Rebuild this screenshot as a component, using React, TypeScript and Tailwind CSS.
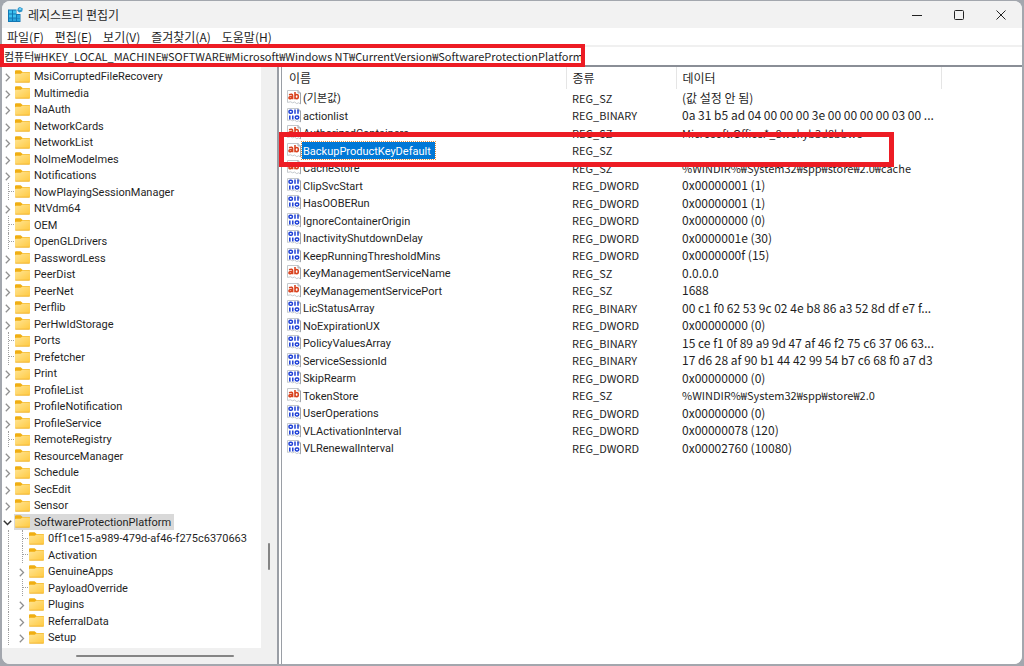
import { useState } from "react"
import clsx from "clsx"

type TreeItem = {
  name: string
  level?: 1
  arrow?: "closed" | "open"
}

type RegistryValue = {
  name: string
  type: "REG_SZ" | "REG_BINARY" | "REG_DWORD"
  data: string
}

const MENUS = ["파일(F)", "편집(E)", "보기(V)", "즐겨찾기(A)", "도움말(H)"]

const KEY_PATH =
  "컴퓨터₩HKEY_LOCAL_MACHINE₩SOFTWARE₩Microsoft₩Windows NT₩CurrentVersion₩SoftwareProtectionPlatform"

const TREE: TreeItem[] = [
  { name: "MsiCorruptedFileRecovery", arrow: "closed" },
  { name: "Multimedia", arrow: "closed" },
  { name: "NaAuth", arrow: "closed" },
  { name: "NetworkCards", arrow: "closed" },
  { name: "NetworkList", arrow: "closed" },
  { name: "NoImeModeImes", arrow: "closed" },
  { name: "Notifications", arrow: "closed" },
  { name: "NowPlayingSessionManager" },
  { name: "NtVdm64", arrow: "closed" },
  { name: "OEM" },
  { name: "OpenGLDrivers" },
  { name: "PasswordLess", arrow: "closed" },
  { name: "PeerDist", arrow: "closed" },
  { name: "PeerNet", arrow: "closed" },
  { name: "Perflib", arrow: "closed" },
  { name: "PerHwIdStorage", arrow: "closed" },
  { name: "Ports" },
  { name: "Prefetcher" },
  { name: "Print", arrow: "closed" },
  { name: "ProfileList", arrow: "closed" },
  { name: "ProfileNotification", arrow: "closed" },
  { name: "ProfileService", arrow: "closed" },
  { name: "RemoteRegistry" },
  { name: "ResourceManager", arrow: "closed" },
  { name: "Schedule", arrow: "closed" },
  { name: "SecEdit", arrow: "closed" },
  { name: "Sensor", arrow: "closed" },
  { name: "SoftwareProtectionPlatform", arrow: "open" },
  { name: "0ff1ce15-a989-479d-af46-f275c6370663", level: 1 },
  { name: "Activation", level: 1 },
  { name: "GenuineApps", level: 1, arrow: "closed" },
  { name: "PayloadOverride", level: 1 },
  { name: "Plugins", level: 1, arrow: "closed" },
  { name: "ReferralData", level: 1, arrow: "closed" },
  { name: "Setup", level: 1, arrow: "closed" },
]

const VALUES: RegistryValue[] = [
  { name: "(기본값)", type: "REG_SZ", data: "(값 설정 안 됨)" },
  { name: "actionlist", type: "REG_BINARY", data: "0a 31 b5 ad 04 00 00 00 3e 00 00 00 00 03 00 ..." },
  { name: "AuthorizedContainers", type: "REG_SZ", data: "Microsoft.Office.*_8wekyb3d8bbwe" },
  { name: "BackupProductKeyDefault", type: "REG_SZ", data: "" },
  { name: "CacheStore", type: "REG_SZ", data: "%WINDIR%₩System32₩spp₩store₩2.0₩cache" },
  { name: "ClipSvcStart", type: "REG_DWORD", data: "0x00000001 (1)" },
  { name: "HasOOBERun", type: "REG_DWORD", data: "0x00000001 (1)" },
  { name: "IgnoreContainerOrigin", type: "REG_DWORD", data: "0x00000000 (0)" },
  { name: "InactivityShutdownDelay", type: "REG_DWORD", data: "0x0000001e (30)" },
  { name: "KeepRunningThresholdMins", type: "REG_DWORD", data: "0x0000000f (15)" },
  { name: "KeyManagementServiceName", type: "REG_SZ", data: "0.0.0.0" },
  { name: "KeyManagementServicePort", type: "REG_SZ", data: "1688" },
  { name: "LicStatusArray", type: "REG_BINARY", data: "00 c1 f0 62 53 9c 02 4e b8 86 a3 52 8d df e7 f..." },
  { name: "NoExpirationUX", type: "REG_DWORD", data: "0x00000000 (0)" },
  { name: "PolicyValuesArray", type: "REG_BINARY", data: "15 ce f1 0f 89 a9 9d 47 af 46 f2 75 c6 37 06 63..." },
  { name: "ServiceSessionId", type: "REG_BINARY", data: "17 d6 28 af 90 b1 44 42 99 54 b7 c6 68 f0 a7 d3" },
  { name: "SkipRearm", type: "REG_DWORD", data: "0x00000000 (0)" },
  { name: "TokenStore", type: "REG_SZ", data: "%WINDIR%₩System32₩spp₩store₩2.0" },
  { name: "UserOperations", type: "REG_DWORD", data: "0x00000000 (0)" },
  { name: "VLActivationInterval", type: "REG_DWORD", data: "0x00000078 (120)" },
  { name: "VLRenewalInterval", type: "REG_DWORD", data: "0x00002760 (10080)" },
]

const AppIcon = () => (
  <svg width="15" height="15" viewBox="0 0 15 15" aria-hidden="true">
    <path d="M0 2.500h8.500V7h4v8H0z" fill="#1277b4" />
    <path d="M1 3.500h3v3H1zM5 3.500h3v3H5zM1 7.500h3v3H1zM5 7.500h3v3H5z" fill="#3cc0ee" />
    <path d="M9 8h3v3H9zM1 11.500h3v2.500H1zM5 11.500h3v2.500H5zM9 11.500h3v2.500H9z" fill="#2aa3dc" />
    <path d="M11.800 0l3 1.600-.6 3-3 1-2-2 .8-2.600z" fill="#2b93c9" />
    <path d="M12 .9l2 1.100-2 1.200-1.600-1.200z" fill="#7fdcff" />
  </svg>
)

const FolderIcon = () => (
  <svg className="shrink-0" width="15" height="13" viewBox="0 0 15 13" aria-hidden="true">
    <defs>
      <linearGradient id="folder" x1="0" y1="0" x2="1" y2="1">
        <stop offset="0" stopColor="#ffe595" />
        <stop offset="1" stopColor="#ffc93f" />
      </linearGradient>
    </defs>
    <path d="M0 1.2Q0 .2 1 .2h4.6l2 1.9H14q1 0 1 1V7H0z" fill="#f0ae12" />
    <path d="M0 4.6q0-.9.9-.9h4.8L7.4 2.4H14q1 0 1 1v8.2q0 1-1 1H1q-1 0-1-1z" fill="url(#folder)" />
    <path d="M.3 12.2h14.4" stroke="#eeb02c" strokeWidth=".8" />
  </svg>
)

const PageOutline = () => (
  <>
    <path d="M.5.5H11l2.500 2.400v11.100l-1.800-1.200-2 .8-2.200-1.600-2 .8-1.800-1-3.200.6z" fill="#fff" stroke="#c4c8cc" />
    <path d="M11 .5v2.400h2.500v11" fill="none" stroke="#a0a5ab" />
  </>
)

const StringIcon = () => (
  <svg className="shrink-0" width="15" height="15" viewBox="0 0 15 15" aria-hidden="true">
    <PageOutline />
    <g fill="none" stroke="#d9431f" strokeWidth="1.6">
      <path d="M2 4.700q3.600-1.300 3.600 1V9.200M5.600 6.500q-3.600-.2-3.600 1.200 0 1.300 1.600 1 2-.3 2-1.600" />
      <path d="M8 2v7.200M8 6q.4-1.500 1.800-1.500 1.500 0 1.500 2.100T9.800 8.700Q8.400 8.700 8 7.300" />
    </g>
  </svg>
)

const BinaryIcon = () => (
  <svg className="shrink-0" width="15" height="15" viewBox="0 0 15 15" aria-hidden="true">
    <PageOutline />
    <g fill="none" stroke="#1d3fd6" strokeWidth="1.500">
      <rect x="2" y="2.300" width="3.400" height="2.900" rx="1.300" />
      <path d="M8 1.600v4.200M11 1.600v4.200M2.800 7.400v4.200M5.800 7.400v4.200" />
      <rect x="8.300" y="8" width="3.400" height="2.900" rx="1.300" />
    </g>
  </svg>
)

const TitleBar = () => (
  <header className="flex h-[27px] shrink-0 items-center bg-[#f2f2f2] pl-[6px]">
    <AppIcon />
    <h1 className="ml-[5px] flex-1 text-[12px] leading-4">레지스트리 편집기</h1>
    <button type="button" aria-label="최소화" className="flex h-full w-[42px] items-center justify-center">
      <svg width="10" height="10" viewBox="0 0 10 10">
        <path d="M0 5.500h10" stroke="#222" />
      </svg>
    </button>
    <button type="button" aria-label="최대화" className="flex h-full w-[42px] items-center justify-center">
      <svg width="10" height="10" viewBox="0 0 10 10">
        <rect x=".5" y=".5" width="9" height="9" rx="1" fill="none" stroke="#222" />
      </svg>
    </button>
    <button type="button" aria-label="닫기" className="flex h-full w-[42px] items-center justify-center">
      <svg width="10" height="10" viewBox="0 0 10 10">
        <path d="M.5.5l9 9M9.500.5l-9 9" stroke="#222" />
      </svg>
    </button>
  </header>
)

const MenuBar = () => (
  <nav className="flex h-[17px] shrink-0 items-center gap-[11px] bg-white pl-[5px]">
    {MENUS.map((menu) => (
      <button key={menu} type="button" className="leading-4">
        {menu}
      </button>
    ))}
  </nav>
)

const TreeRow = ({ item }: { item: TreeItem }) => {
  const open = item.arrow === "open"

  return (
    <li className="flex h-[17px] items-center odd:h-4">
      {item.level && <span className="ml-[5px] mr-2 w-px self-stretch border-l border-dotted border-[#a0a0a0]" />}
      {item.arrow ? (
        <button
          type="button"
          aria-label={item.name}
          aria-expanded={open}
          className="flex h-full w-[11px] shrink-0 items-center pt-[3px]"
        >
          {open ? (
            <svg width="9" height="6" viewBox="0 0 9 6">
              <path d="M.8.8l3.700 3.700L8.200.8" fill="none" stroke="#333" strokeWidth="1.500" />
            </svg>
          ) : (
            <svg className="ml-[2px]" width="6" height="9" viewBox="0 0 6 9">
              <path d="M.8.8l3.700 3.700L.8 8.200" fill="none" stroke="#909090" strokeWidth="1.300" />
            </svg>
          )}
        </button>
      ) : (
        <span className="ml-[5px] flex w-[6px] shrink-0 items-center self-stretch border-l border-dotted border-[#a0a0a0]">
          <span className="w-full border-t border-dotted border-[#a0a0a0]" />
        </span>
      )}
      <span className={clsx("flex h-4 items-center gap-1 pl-px pr-[3px]", open && "bg-[#d9d9d9]")}>
        <FolderIcon />
        <span className="whitespace-nowrap pt-[2px] leading-[14px]">{item.name}</span>
      </span>
    </li>
  )
}

const KeyTree = () => (
  <aside className="flex w-[275px] shrink-0 bg-[#f0f0f0] font-[Roboto,'Noto_Sans_CJK_KR',sans-serif] text-[11px]">
    <div className="flex min-w-0 flex-1 flex-col">
      <ul className="flex-1 overflow-hidden bg-white pl-px pt-px">
        {TREE.map((item) => (
          <TreeRow key={item.name} item={item} />
        ))}
      </ul>
      <div className="flex h-4 shrink-0 items-center pl-[74px]">
        <div className="h-[2px] w-[158px] rounded-full bg-[#858585]" />
      </div>
    </div>
    <div className="flex w-4 shrink-0 justify-center pt-[476px]">
      <div className="h-[27px] w-[2px] rounded-full bg-[#858585]" />
    </div>
  </aside>
)

const ValueTable = () => {
  const [selected, setSelected] = useState("BackupProductKeyDefault")

  return (
    <section className="flex-1 bg-white">
      <table className="w-full table-fixed text-left">
        <colgroup>
          <col className="w-[284px]" />
          <col className="w-[110px]" />
          <col className="w-[265px]" />
          <col />
        </colgroup>
        <thead>
          <tr className="h-[22px]">
            <th className="border-r border-[#e5e5e5] p-0 pl-[7px] font-normal">이름</th>
            <th className="border-r border-[#e5e5e5] p-0 pl-[6px] font-normal">종류</th>
            <th className="border-r border-[#e5e5e5] p-0 pl-[6px] font-normal">데이터</th>
            <td />
          </tr>
        </thead>
        <tbody>
          {VALUES.map((value) => (
            <tr key={value.name} className="h-[18px] odd:h-[17px]" onClick={() => setSelected(value.name)}>
              <td className="relative p-0 pl-[5px] font-[Roboto,'Noto_Sans_CJK_KR',sans-serif] text-[11px]">
                <span className="flex h-[17px] items-center">
                  {value.type === "REG_SZ" ? <StringIcon /> : <BinaryIcon />}
                  <span
                    className={clsx(
                      "px-px pt-[3px] leading-[14px]",
                      value.name === selected &&
                        "bg-[#0078d7] pr-1 text-white outline-1 outline-dotted outline-[#e08a3c]"
                    )}
                  >
                    {value.name}
                  </span>
                </span>
                {value.name === "BackupProductKeyDefault" && (
                  <span className="pointer-events-none absolute -left-[3px] -top-[9px] z-10 h-[35px] w-[615px] border-[5px] border-[#ed1c24]" />
                )}
              </td>
              <td className="p-0 pl-[6px] text-[11px] leading-4">{value.type}</td>
              <td className={clsx("truncate p-0 pl-[6px] leading-4", /[₩_]/.test(value.data) && "text-[11px]")}>
                {value.data}
              </td>
              <td />
            </tr>
          ))}
        </tbody>
      </table>
    </section>
  )
}

export default function App() {
  return (
    <div className="flex min-h-screen flex-col bg-[#a3a7ae] px-[2px] pb-[2px] pt-px font-['Noto_Sans_CJK_KR',sans-serif] text-[12px] leading-4 text-[#1f1f1f]">
      <div className="flex flex-1 flex-col overflow-hidden rounded-lg bg-[#f0f0f0]">
        <TitleBar />
        <MenuBar />
        <div className="mt-[2px] flex h-[20px] shrink-0 border-b-2 border-[#8a8e96] bg-white">
          <input
            aria-label="주소"
            defaultValue={KEY_PATH}
            className="w-full bg-transparent pl-[2px] text-[11px] outline-none"
          />
          <span className="pointer-events-none absolute left-0 top-[44px] z-10 h-[23px] w-[585px] border-4 border-[#ed1c24]" />
        </div>
        <div className="flex flex-1">
          <KeyTree />
          <div className="w-[5px] shrink-0 border-l-2 border-r border-[#9a9ea5] bg-white" />
          <ValueTable />
        </div>
      </div>
    </div>
  )
}
